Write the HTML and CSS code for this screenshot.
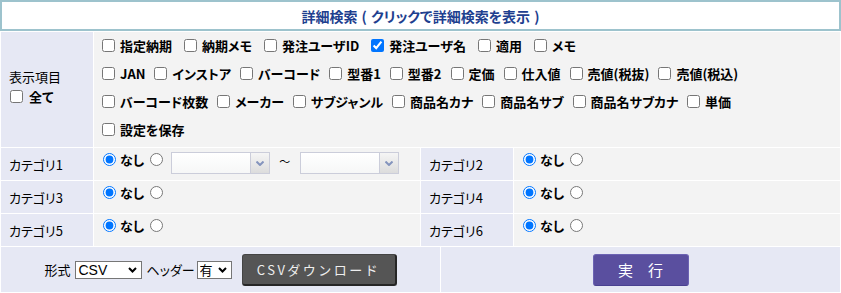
FILE: index.html
```html
<!DOCTYPE html>
<html lang="ja">
<head>
  <meta charset="UTF-8">
  <title>詳細検索</title>
  <link rel="stylesheet" href="styles.css">
</head>
<body>
  <div class="detail-toggle">
    <span class="detail-title">詳細検索 ( クリックで詳細検索を表示 )</span>
  </div>

  <div class="search-grid">
    <div class="label-cell label-items">
      <span>表示項目</span>
      <label class="all-check"><input type="checkbox">全て</label>
    </div>
    <div class="value-cell items-cell">
      <div class="opt-line first">
        <label class="opt"><input type="checkbox">指定納期</label>
        <label class="opt"><input type="checkbox">納期メモ</label>
        <label class="opt"><input type="checkbox">発注ユーザID</label>
        <label class="opt"><input type="checkbox" checked>発注ユーザ名</label>
        <label class="opt"><input type="checkbox">適用</label>
        <label class="opt"><input type="checkbox">メモ</label>
      </div>
      <div class="opt-line">
        <label class="opt"><input type="checkbox">JAN</label>
        <label class="opt"><input type="checkbox">インストア</label>
        <label class="opt"><input type="checkbox">バーコード</label>
        <label class="opt"><input type="checkbox">型番1</label>
        <label class="opt"><input type="checkbox">型番2</label>
        <label class="opt"><input type="checkbox">定価</label>
        <label class="opt"><input type="checkbox">仕入値</label>
        <label class="opt"><input type="checkbox">売値(税抜)</label>
        <label class="opt"><input type="checkbox">売値(税込)</label>
      </div>
      <div class="opt-line">
        <label class="opt"><input type="checkbox">バーコード枚数</label>
        <label class="opt"><input type="checkbox">メーカー</label>
        <label class="opt"><input type="checkbox">サブジャンル</label>
        <label class="opt"><input type="checkbox">商品名カナ</label>
        <label class="opt"><input type="checkbox">商品名サブ</label>
        <label class="opt"><input type="checkbox">商品名サブカナ</label>
        <label class="opt"><input type="checkbox">単価</label>
      </div>
      <div class="opt-line">
        <label class="opt"><input type="checkbox">設定を保存</label>
      </div>
    </div>

    <!-- カテゴリ -->
    <div class="label-cell">カテゴリ1</div>
    <div class="value-cell cat-cell">
      <label class="choice"><input type="radio" name="cat1" checked>なし</label>
      <input type="radio" name="cat1" class="radio-alt">
      <div class="combo combo-from"><select></select><span class="combo-btn"><svg width="8" height="5" viewBox="0 0 8 5"><path d="M0.5 0.5 L4 4 L7.5 0.5" fill="none" stroke="#8494bd" stroke-width="2"/></svg></span></div>
      <span class="range-sep">～</span>
      <div class="combo"><select></select><span class="combo-btn"><svg width="8" height="5" viewBox="0 0 8 5"><path d="M0.5 0.5 L4 4 L7.5 0.5" fill="none" stroke="#8494bd" stroke-width="2"/></svg></span></div>
    </div>
    <div class="label-cell">カテゴリ2</div>
    <div class="value-cell cat-cell">
      <label class="choice"><input type="radio" name="cat2" checked>なし</label>
      <input type="radio" name="cat2" class="radio-alt">
    </div>

    <div class="label-cell">カテゴリ3</div>
    <div class="value-cell cat-cell">
      <label class="choice"><input type="radio" name="cat3" checked>なし</label>
      <input type="radio" name="cat3" class="radio-alt">
    </div>
    <div class="label-cell">カテゴリ4</div>
    <div class="value-cell cat-cell">
      <label class="choice"><input type="radio" name="cat4" checked>なし</label>
      <input type="radio" name="cat4" class="radio-alt">
    </div>

    <div class="label-cell">カテゴリ5</div>
    <div class="value-cell cat-cell">
      <label class="choice"><input type="radio" name="cat5" checked>なし</label>
      <input type="radio" name="cat5" class="radio-alt">
    </div>
    <div class="label-cell">カテゴリ6</div>
    <div class="value-cell cat-cell">
      <label class="choice"><input type="radio" name="cat6" checked>なし</label>
      <input type="radio" name="cat6" class="radio-alt">
    </div>
  </div>

  <div class="action-row">
    <div class="action-cell">
      <span class="action-label">形式</span>
      <span class="select-box box-format">
        <select>
          <option>CSV</option>
          <option>TSV</option>
        </select>
        <svg width="9" height="6" viewBox="0 0 9 6"><path d="M1 1 L4.5 4.5 L8 1" fill="none" stroke="#000" stroke-width="2"/></svg>
      </span>
      <span class="action-label">ヘッダー</span>
      <span class="select-box box-header">
        <select>
          <option>有</option>
          <option>無</option>
        </select>
        <svg width="9" height="6" viewBox="0 0 9 6"><path d="M1 1 L4.5 4.5 L8 1" fill="none" stroke="#000" stroke-width="2"/></svg>
      </span>
      <button class="btn-csv">CSVダウンロード</button>
    </div>
    <div class="action-cell">
      <button class="btn-run">実　行</button>
    </div>
  </div>
</body>
</html>
```

FILE: styles.css
```css
body {
  margin: 0;
  padding: 0;
  font-family: "Noto Sans CJK JP", sans-serif;
  font-size: 13px;
  color: #000;
  background-color: #ffffff;
  font-feature-settings: "palt";
}

.detail-toggle {
  height: 31px;
  box-sizing: border-box;
  border: 2px solid #9dc3cd; /* 水色の枠 */
  background-color: #ffffff;
  display: flex;
  align-items: center;
  justify-content: center;
  cursor: pointer;
}

.detail-title {
  font-size: 14px;
  font-weight: bold;
  color: #1e3f8f;
  word-spacing: 1px;
}

.search-grid {
  display: grid;
  grid-template-columns: 92px 326px 92px 1fr;
  gap: 1px;
  padding: 1px;
  padding-bottom: 0;
  background-color: #ffffff;
}

.label-cell {
  background-color: #e6e8f4; /* ラベンダー */
  padding-left: 8px;
  display: flex;
  align-items: center;
  height: 32px;
}

.value-cell {
  background-color: #f3f3f3; /* グレー */
  padding: 0 4px;
}

.label-items {
  grid-column: 1;
  height: auto;
  flex-direction: column;
  align-items: flex-start;
  justify-content: center;
  padding-bottom: 6px;
  box-sizing: border-box;
}

.label-items span {
  line-height: 20px;
}

.all-check {
  display: flex;
  align-items: center;
  height: 20px;
  font-weight: bold;
}

.all-check input {
  margin: 0 6px 0 1px;
}

.items-cell {
  grid-column: 2 / 5;
  height: 115px;
  box-sizing: border-box;
  padding-top: 0;
}

.opt-line {
  display: flex;
  align-items: center;
  height: 29px;
  margin-top: -1px;
}

.opt {
  display: flex;
  align-items: center;
  font-size: 13px;
  font-weight: bold;
  margin-right: 5px;
}

.opt-line.first .opt {
  margin-right: 8px;
}

.opt input {
  width: 13px;
  height: 13px;
  margin: 0 5px 0 4px;
}

.cat-cell {
  display: flex;
  align-items: flex-start;
  padding-top: 4px;
  height: 32px;
  box-sizing: border-box;
}

.choice {
  display: flex;
  align-items: flex-start;
  font-size: 13px;
  font-weight: bold;
  line-height: 16px;
}

.choice input,
.radio-alt {
  width: 13px;
  height: 13px;
  margin: 1px 4px 0 5px;
}

.radio-alt {
  margin-left: 6px;
  margin-right: 0;
}

.combo {
  display: flex;
  width: 99px;
  height: 22px;
  box-sizing: border-box;
  border: 1px solid #cbcdda;
  background: linear-gradient(#ffffff, #f6f7f7);
}

.combo-from {
  margin-left: 8px;
}

.combo select {
  flex: 1;
  border: none;
  background: transparent;
  appearance: none;
  outline: none;
}

.combo-btn {
  width: 18px;
  border-left: 1px solid #cbcdda;
  background: linear-gradient(#f5f5f5, #dcdcdc);
  display: flex;
  align-items: center;
  justify-content: center;
}

.range-sep {
  font-size: 11px;
  line-height: 18px;
  margin: 0 10px 0 9px;
}

.action-row {
  display: grid;
  grid-template-columns: 439px 1fr;
  gap: 1px;
  padding: 1px;
  background-color: #ffffff;
}

.action-cell {
  background-color: #e6e8f4;
  height: 45px;
  display: flex;
  align-items: center;
  justify-content: center;
}

.action-label {
  font-size: 13px;
}

.select-box {
  display: inline-flex;
  align-items: center;
  height: 18px;
  box-sizing: border-box;
  border: 1px solid #767676;
  background-color: #ffffff;
}

.select-box select {
  appearance: none;
  border: none;
  outline: none;
  background: transparent;
  padding: 0 0 0 2px;
  height: 16px;
  font-family: "Liberation Sans", Arial, sans-serif;
  font-size: 14px;
  color: #000;
}

.select-box svg {
  margin: 0 4px 0 0;
}

.box-format {
  width: 67px;
  margin: 0 4px 0 5px;
}

.box-format select {
  width: 52px;
}

.box-header {
  width: 35px;
  margin: 0 10px 0 2px;
}

.box-header select {
  width: 20px;
  font-family: "Noto Sans CJK JP", sans-serif;
  font-size: 13px;
  line-height: 16px;
}

.btn-csv {
  width: 155px;
  height: 32px;
  background-color: #555555;
  color: #eeeeee;
  border: 1px solid #444444;
  border-right: 2px solid #262626;
  border-bottom: 2px solid #262626;
  border-radius: 3px;
  font-family: "Noto Sans CJK JP", sans-serif;
  font-feature-settings: normal;
  font-size: 13px;
  letter-spacing: 2.5px;
  cursor: pointer;
}

.btn-run {
  width: 96px;
  height: 32px;
  background-color: #5a4f9f;
  color: #ffffff;
  border: 1px solid #6c63b3;
  border-bottom-color: #4a4190;
  border-radius: 3px;
  font-family: "Noto Sans CJK JP", sans-serif;
  font-size: 15px;
  cursor: pointer;
}
```
